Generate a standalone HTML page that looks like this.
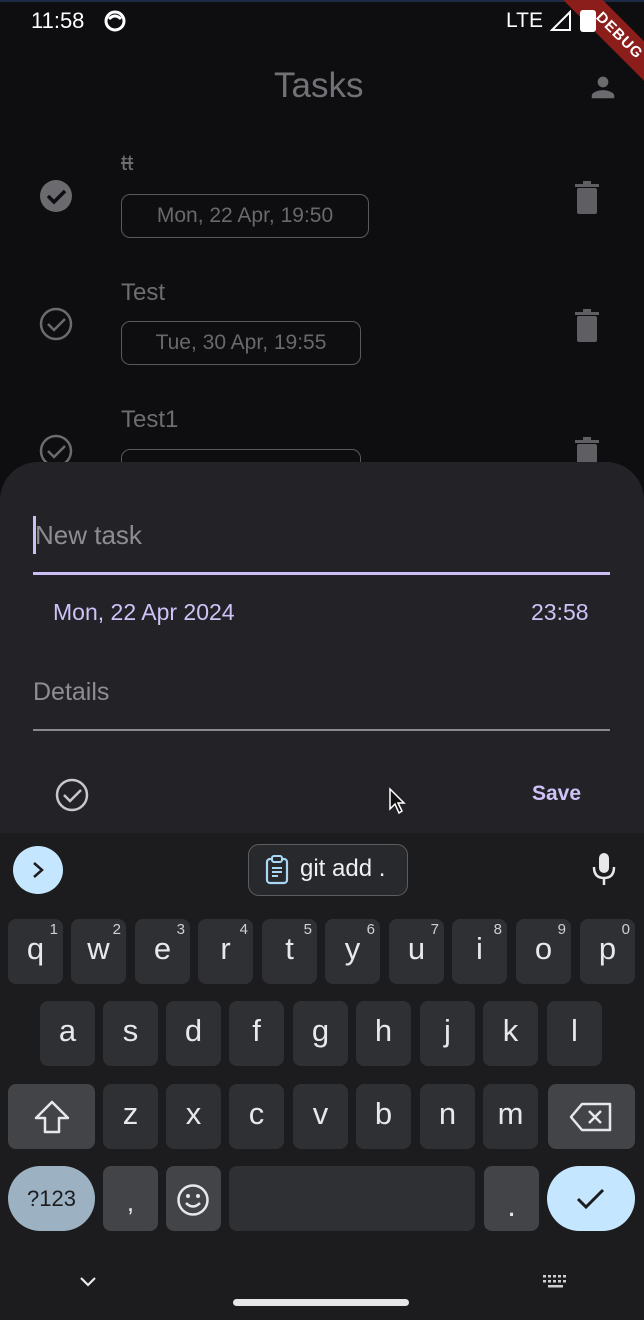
<!DOCTYPE html>
<html><head><meta charset="utf-8"><style>
*{margin:0;padding:0;box-sizing:border-box}
body{width:644px;height:1320px;overflow:hidden;background:#0e0e11;font-family:"Liberation Sans",sans-serif;position:relative}
.a{position:absolute}
.t{color:#6d6c70;white-space:nowrap}
.chip{position:absolute;border:1.5px solid #5a595d;border-radius:9px;height:44px;color:#69686c;font-size:21px;line-height:41px;text-align:center}
.k{position:absolute;width:55px;height:65px;background:#2f3033;border-radius:8px;color:#e8e8ea;font-size:31px;text-align:center;line-height:60px}
.k sup{position:absolute;right:5px;top:2px;font-size:15px;line-height:18px;color:#d0d0d3}
.sp{background:#434447}
</style></head><body>
<div class="a" style="left:0;top:0;width:644px;height:2px;background:#1d2a44"></div>
<div class="a" style="left:31px;top:8px;color:#fff;font-size:22px">11:58</div>
<svg class="a" style="left:104px;top:10px" width="22" height="22" viewBox="0 0 22 22"><circle cx="11" cy="11" r="9" fill="none" stroke="#fff" stroke-width="3"/><path d="M5 9 Q11 3 17 9" stroke="#fff" stroke-width="3" fill="none"/></svg>
<div class="a" style="left:506px;top:9px;color:#fff;font-size:21px">LTE</div>
<div class="a" style="left:534px;top:22px;width:170px;height:28px;background:#8b1d1a;transform:rotate(45deg);color:#fff;font-size:15px;font-weight:bold;text-align:center;line-height:28px;letter-spacing:1px">DEBUG</div>
<svg class="a" style="left:550px;top:10px" width="22" height="22"><path d="M2 20 L20 2 L20 20 Z" fill="none" stroke="#fff" stroke-width="2"/></svg>
<div class="a" style="left:580px;top:10px;width:16px;height:22px;background:#fff;border-radius:3px"></div>
<div class="a t" style="left:274px;top:66px;font-size:35px;color:#727176">Tasks</div>
<svg class="a" style="left:588px;top:72px" width="30" height="30" viewBox="0 0 24 24"><circle cx="12" cy="8" r="4.3" fill="#6b6a6e"/><path d="M3 21v-2c0-3 6-4.5 9-4.5s9 1.5 9 4.5v2z" fill="#6b6a6e"/></svg>
<svg class="a" style="left:39px;top:179px" width="34" height="34" viewBox="0 0 34 34"><circle cx="17" cy="17" r="16" fill="#6b6a6e"/><path d="M9 17l6 6 11-11" stroke="#0e0e11" stroke-width="3.5" fill="none"/></svg>
<div class="a t" style="left:121px;top:150px;font-size:22px;text-decoration:line-through">tt</div>
<div class="chip" style="left:121px;top:194px;width:248px">Mon, 22 Apr, 19:50</div>
<svg class="a" style="left:574px;top:180px" width="26" height="34" viewBox="0 0 26 34"><rect x="3" y="8" width="20" height="26" rx="2" fill="#5f5e62"/><rect x="1" y="4" width="24" height="3" fill="#5f5e62"/><rect x="9" y="1" width="8" height="3" fill="#5f5e62"/></svg>
<svg class="a" style="left:39px;top:307px" width="34" height="34" viewBox="0 0 34 34"><circle cx="17" cy="17" r="15" fill="none" stroke="#6b6a6e" stroke-width="2.5"/><path d="M9 17l6 6 11-11" stroke="#6b6a6e" stroke-width="2.5" fill="none"/></svg>
<div class="a t" style="left:121px;top:279px;font-size:24px">Test</div>
<div class="chip" style="left:121px;top:321px;width:240px">Tue, 30 Apr, 19:55</div>
<svg class="a" style="left:574px;top:308px" width="26" height="34" viewBox="0 0 26 34"><rect x="3" y="8" width="20" height="26" rx="2" fill="#5f5e62"/><rect x="1" y="4" width="24" height="3" fill="#5f5e62"/><rect x="9" y="1" width="8" height="3" fill="#5f5e62"/></svg>
<svg class="a" style="left:39px;top:434px" width="34" height="34" viewBox="0 0 34 34"><circle cx="17" cy="17" r="15" fill="none" stroke="#6b6a6e" stroke-width="2.5"/><path d="M9 17l6 6 11-11" stroke="#6b6a6e" stroke-width="2.5" fill="none"/></svg>
<div class="a t" style="left:121px;top:406px;font-size:24px">Test1</div>
<div class="chip" style="left:121px;top:449px;width:240px"></div>
<svg class="a" style="left:574px;top:436px" width="26" height="34" viewBox="0 0 26 34"><rect x="3" y="8" width="20" height="26" rx="2" fill="#5f5e62"/><rect x="1" y="4" width="24" height="3" fill="#5f5e62"/><rect x="9" y="1" width="8" height="3" fill="#5f5e62"/></svg>
<div class="a" style="left:0;top:462px;width:644px;height:380px;background:#232227;border-radius:38px 38px 0 0"></div>
<div class="a" style="left:33px;top:516px;width:3px;height:38px;background:#cbbff5"></div>
<div class="a" style="left:35px;top:520px;color:#8e8d92;font-size:26px">New task</div>
<div class="a" style="left:33px;top:572px;width:577px;height:3px;background:#cbbff5"></div>
<div class="a" style="left:53px;top:599px;color:#cfc2f7;font-size:23px">Mon, 22 Apr 2024</div>
<div class="a" style="left:531px;top:599px;color:#cfc2f7;font-size:23px">23:58</div>
<div class="a" style="left:33px;top:678px;color:#8e8d92;font-size:25px">Details</div>
<div class="a" style="left:33px;top:729px;width:577px;height:2px;background:#8a898e"></div>
<svg class="a" style="left:55px;top:778px" width="34" height="34" viewBox="0 0 34 34"><circle cx="17" cy="17" r="15" fill="none" stroke="#c8c7cc" stroke-width="2.5"/><path d="M9 17l6 6 11-11" stroke="#c8c7cc" stroke-width="2.5" fill="none"/></svg>
<svg class="a" style="left:388px;top:787px" width="18" height="28" viewBox="0 0 18 28"><path d="M2 2 L2 22 L7 17 L11 26 L14 24 L10 16 L16 16 Z" fill="#111" stroke="#fff" stroke-width="1.5"/></svg>
<div class="a" style="left:532px;top:782px;color:#cfc2f7;font-size:21px;font-weight:bold">Save</div>
<div class="a" style="left:0;top:833px;width:644px;height:487px;background:#1c1c1f"></div>
<div class="a" style="left:13px;top:846px;width:50px;height:48px;border-radius:50%;background:#c4e7ff"></div>
<svg class="a" style="left:29px;top:860px" width="18" height="20"><path d="M5 3 L13 10 L5 17" stroke="#1c1c1f" stroke-width="2.5" fill="none"/></svg>
<div class="a" style="left:248px;top:844px;width:160px;height:52px;border:1.5px solid #5c5d60;border-radius:11px;background:#28292c"></div>
<svg class="a" style="left:264px;top:855px" width="26" height="30" viewBox="0 0 26 30"><rect x="3" y="4" width="20" height="24" rx="3" fill="none" stroke="#a9d8f5" stroke-width="2.2"/><rect x="8" y="1" width="10" height="6" rx="2" fill="#28292c" stroke="#a9d8f5" stroke-width="2"/><path d="M8 13h10M8 17h10M8 21h6" stroke="#a9d8f5" stroke-width="2"/></svg>
<div class="a" style="left:300px;top:855px;color:#f0f0f2;font-size:24px">git add .</div>
<svg class="a" style="left:590px;top:851px" width="28" height="36" viewBox="0 0 28 36"><rect x="9" y="2" width="10" height="20" rx="5" fill="#e8e8ea"/><path d="M4 16 Q4 27 14 27 Q24 27 24 16" stroke="#e8e8ea" stroke-width="2.5" fill="none"/><path d="M14 27v7" stroke="#e8e8ea" stroke-width="2.5"/></svg>
<div class="k" style="left:8px;top:919px">q<sup>1</sup></div>
<div class="k" style="left:71px;top:919px">w<sup>2</sup></div>
<div class="k" style="left:135px;top:919px">e<sup>3</sup></div>
<div class="k" style="left:198px;top:919px">r<sup>4</sup></div>
<div class="k" style="left:262px;top:919px">t<sup>5</sup></div>
<div class="k" style="left:325px;top:919px">y<sup>6</sup></div>
<div class="k" style="left:389px;top:919px">u<sup>7</sup></div>
<div class="k" style="left:452px;top:919px">i<sup>8</sup></div>
<div class="k" style="left:516px;top:919px">o<sup>9</sup></div>
<div class="k" style="left:580px;top:919px">p<sup>0</sup></div>
<div class="k" style="left:40px;top:1001px">a</div>
<div class="k" style="left:103px;top:1001px">s</div>
<div class="k" style="left:166px;top:1001px">d</div>
<div class="k" style="left:229px;top:1001px">f</div>
<div class="k" style="left:293px;top:1001px">g</div>
<div class="k" style="left:356px;top:1001px">h</div>
<div class="k" style="left:420px;top:1001px">j</div>
<div class="k" style="left:483px;top:1001px">k</div>
<div class="k" style="left:547px;top:1001px">l</div>
<div class="k sp" style="left:8px;top:1084px;width:87px"></div>
<svg class="a" style="left:32px;top:1099px" width="40" height="36" viewBox="0 0 40 36"><path d="M20 3 L36 19 L27 19 L27 33 L13 33 L13 19 L4 19 Z" fill="none" stroke="#e8e8ea" stroke-width="2.5" stroke-linejoin="round"/></svg>
<div class="k" style="left:103px;top:1084px">z</div>
<div class="k" style="left:166px;top:1084px">x</div>
<div class="k" style="left:229px;top:1084px">c</div>
<div class="k" style="left:293px;top:1084px">v</div>
<div class="k" style="left:356px;top:1084px">b</div>
<div class="k" style="left:420px;top:1084px">n</div>
<div class="k" style="left:483px;top:1084px">m</div>
<div class="k sp" style="left:548px;top:1084px;width:87px"></div>
<svg class="a" style="left:568px;top:1101px" width="46" height="32" viewBox="0 0 46 32"><path d="M14 3 L42 3 L42 29 L14 29 L3 16 Z" fill="none" stroke="#e8e8ea" stroke-width="2.5" stroke-linejoin="round"/><path d="M21 10l12 12M33 10l-12 12" stroke="#e8e8ea" stroke-width="2.5"/></svg>
<div class="k" style="left:8px;top:1166px;width:87px;border-radius:33px;background:#9cb2c2;color:#1c1c1f;font-size:22px;line-height:66px">?123</div>
<div class="k sp" style="left:103px;top:1166px;line-height:72px;font-size:26px">,</div>
<div class="k sp" style="left:166px;top:1166px"></div>
<svg class="a" style="left:176px;top:1183px" width="34" height="34" viewBox="0 0 34 34"><circle cx="17" cy="17" r="14.5" fill="none" stroke="#e8e8ea" stroke-width="2.5"/><circle cx="12" cy="13" r="2" fill="#e8e8ea"/><circle cx="22" cy="13" r="2" fill="#e8e8ea"/><path d="M10 20 Q17 27 24 20" stroke="#e8e8ea" stroke-width="2.5" fill="none"/></svg>
<div class="k" style="left:229px;top:1166px;width:246px"></div>
<div class="k sp" style="left:484px;top:1166px;line-height:80px">.</div>
<div class="k" style="left:547px;top:1166px;width:88px;border-radius:33px;background:#c4e7ff"></div>
<svg class="a" style="left:575px;top:1186px" width="32" height="26"><path d="M3 13 L11 21 L28 4" stroke="#1c1c1f" stroke-width="3" fill="none"/></svg>
<svg class="a" style="left:78px;top:1275px" width="20" height="14"><path d="M3 3 L10 10 L17 3" stroke="#e8e8ea" stroke-width="2.2" fill="none"/></svg>
<svg class="a" style="left:542px;top:1274px" width="28" height="18" viewBox="0 0 28 18"><g fill="#cfcfd2"><rect x="1" y="1" width="3" height="2.5"/><rect x="6" y="1" width="3" height="2.5"/><rect x="11" y="1" width="3" height="2.5"/><rect x="16" y="1" width="3" height="2.5"/><rect x="21" y="1" width="3" height="2.5"/><rect x="1" y="6" width="3" height="2.5"/><rect x="6" y="6" width="3" height="2.5"/><rect x="11" y="6" width="3" height="2.5"/><rect x="16" y="6" width="3" height="2.5"/><rect x="21" y="6" width="3" height="2.5"/><rect x="6" y="11" width="15" height="2.5"/></g></svg>
<div class="a" style="left:233px;top:1299px;width:176px;height:7px;border-radius:4px;background:#e6e6e8"></div>
</body></html>
